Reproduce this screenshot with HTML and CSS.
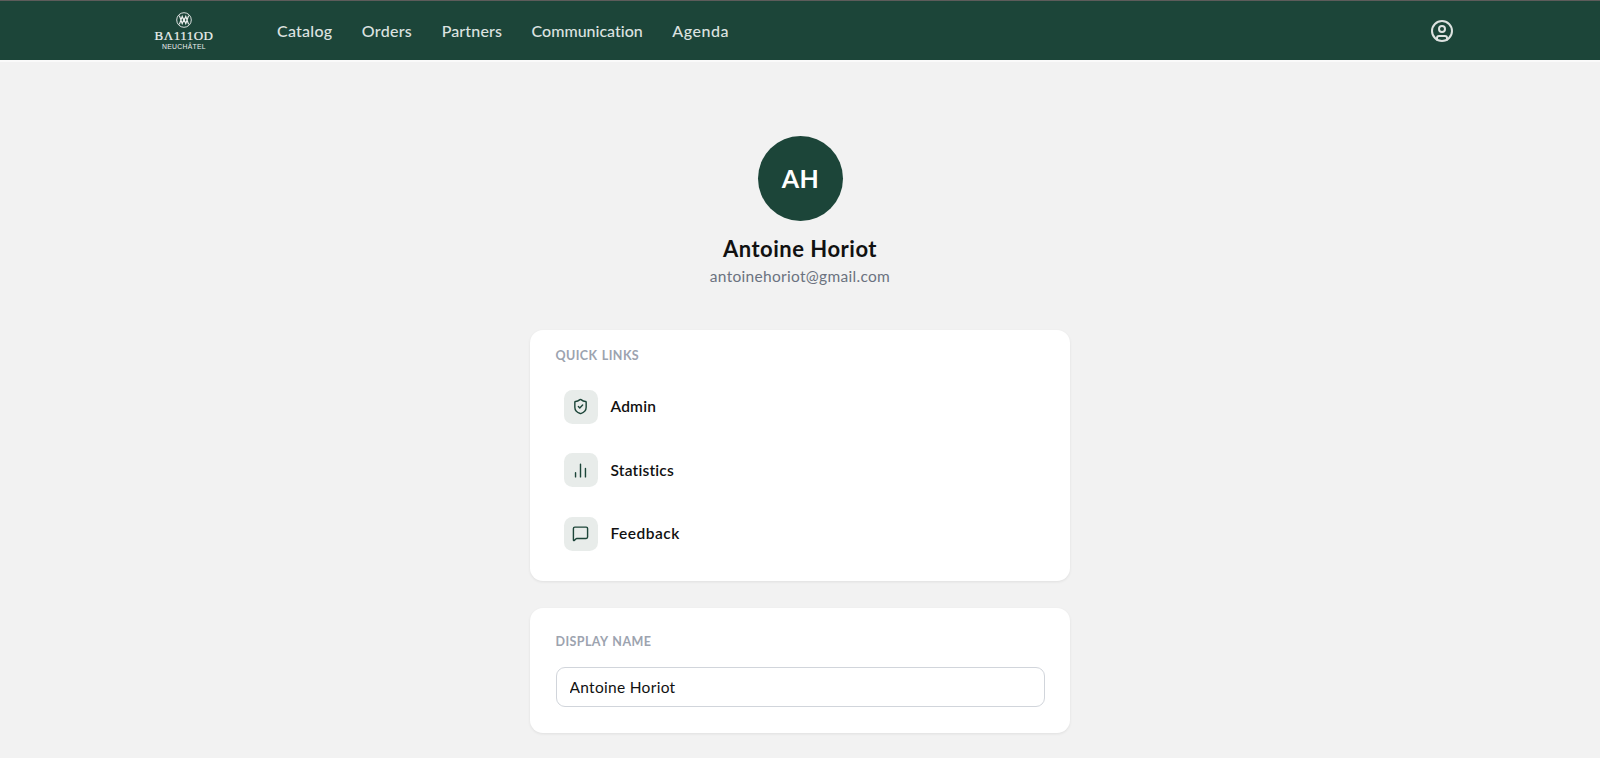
FILE: index.html
```html
<!DOCTYPE html>
<html lang="en">
<head>
  <meta charset="UTF-8">
  <meta name="viewport" content="width=device-width, initial-scale=1.0">
  <title>Profile</title>
  <link rel="stylesheet" href="styles.css">
</head>
<body>
  <header class="navbar">
    <a class="logo" href="#">
      <svg class="logo-mark" viewBox="0 0 16 16" fill="none" stroke="currentColor">
        <circle cx="8" cy="8" r="7.3" stroke-width="0.9"/>
        <path d="M3.4 3.6 6.2 11.6 8 7.4 9.8 11.6 12.6 3.6M3.4 12.4 6.2 4.4 8 8.6 9.8 4.4 12.6 12.4" stroke-width="1.2"/>
      </svg>
      <span class="logo-name">BΛ111OD</span>
      <span class="logo-city">NEUCHÂTEL</span>
    </a>
    <nav class="nav-links">
      <a class="nav-catalog" href="#">Catalog</a>
      <a class="nav-orders" href="#">Orders</a>
      <a class="nav-partners" href="#">Partners</a>
      <a class="nav-communication" href="#">Communication</a>
      <a class="nav-agenda" href="#">Agenda</a>
    </nav>
    <a class="account" href="#" aria-label="Account">
      <svg viewBox="0 0 24 24" fill="none" stroke="currentColor" stroke-width="2" stroke-linecap="round" stroke-linejoin="round">
        <circle cx="12" cy="12" r="10"/>
        <circle cx="12" cy="10" r="3"/>
        <path d="M7 20.7V19a2 2 0 0 1 2-2h6a2 2 0 0 1 2 2v1.7"/>
      </svg>
    </a>
  </header>

  <main class="profile">
    <div class="avatar">AH</div>
    <h1>Antoine Horiot</h1>
    <p class="email">antoinehoriot@gmail.com</p>

    <section class="card quick-links">
      <h2>QUICK LINKS</h2>
      <a class="quick-link" href="#">
        <span class="link-icon">
          <svg viewBox="0 0 24 24">
            <path d="M20 13c0 5-3.5 7.5-7.66 8.95a1 1 0 0 1-.67-.01C7.5 20.5 4 18 4 13V6a1 1 0 0 1 1-1c2 0 4.5-1.2 6.24-2.72a1.17 1.17 0 0 1 1.52 0C14.51 3.81 17 5 19 5a1 1 0 0 1 1 1z"/>
            <path d="m9 12 2 2 4-4"/>
          </svg>
        </span>
        <span class="link-text">Admin</span>
      </a>
      <a class="quick-link" href="#">
        <span class="link-icon">
          <svg viewBox="0 0 24 24">
            <path d="M5 21v-6M12 21V3M19 21V9"/>
          </svg>
        </span>
        <span class="link-text">Statistics</span>
      </a>
      <a class="quick-link" href="#">
        <span class="link-icon">
          <svg viewBox="0 0 24 24">
            <path d="M22 17a2 2 0 0 1-2 2H6.8a2 2 0 0 0-1.4.6l-2.2 2.2A.7.7 0 0 1 2 21.3V5a2 2 0 0 1 2-2h16a2 2 0 0 1 2 2z"/>
          </svg>
        </span>
        <span class="link-text link-feedback">Feedback</span>
      </a>
    </section>

    <section class="card display-name">
      <label for="display_name">DISPLAY NAME</label>
      <input type="text" id="display_name" name="display_name" value="Antoine Horiot">
    </section>
  </main>
</body>
</html>
```
FILE: styles.css
```css
* {
  box-sizing: border-box;
}
body {
  margin: 0;
  height: 758px;
  overflow: hidden;
  background-color: #f2f2f2;
  color: #111;
  font-family: Lato, "Liberation Sans", sans-serif;
  font-variant-ligatures: none;
}
a {
  color: inherit;
  text-decoration: none;
}
.navbar {
  display: flex;
  align-items: center;
  height: 62px;
  padding: 0 146px 0 154px;
  background-color: #1c4539;
  border-top: 1px solid #5d5c5b;
  border-bottom: 2px solid #fafafa;
  color: #dde2e0;
}
.logo {
  display: flex;
  flex-direction: column;
  align-items: center;
  width: 60px;
  padding-top: 1px;
  color: #eef1f0;
}
.logo-mark {
  width: 16px;
  height: 16px;
}
.logo-name {
  font-family: "Liberation Serif", serif;
  font-size: 13px;
  line-height: 13px;
  letter-spacing: 0.5px;
  margin-top: 1px;
  -webkit-text-stroke: 0.2px currentColor;
}
.logo-city {
  margin-top: 1px;
  font-family: "Liberation Sans", sans-serif;
  font-size: 6.8px;
  line-height: 8px;
  letter-spacing: 0.3px;
}
.nav-links {
  display: flex;
  gap: 29.5px;
  margin-left: 63px;
  padding-top: 1px;
  font-size: 16px;
  font-weight: 500;
  line-height: 20px;
}
.nav-catalog {
  letter-spacing: 0.25px;
}
.nav-orders {
  letter-spacing: 0.3px;
}
.nav-partners {
  letter-spacing: 0.15px;
}
.nav-agenda {
  letter-spacing: 0.55px;
}
.account {
  display: flex;
  margin-left: auto;
}
.account svg {
  width: 24px;
  height: 24px;
}
.profile {
  display: flex;
  flex-direction: column;
  align-items: center;
  width: 540px;
  margin: 0 auto;
  padding-top: 74px;
}
.avatar {
  display: flex;
  align-items: center;
  justify-content: center;
  width: 85px;
  height: 85px;
  padding: 0 0 1px 1px;
  border-radius: 50%;
  background-color: #1c4539;
  color: white;
  font-size: 25px;
  font-weight: 700;
  letter-spacing: 0.5px;
}
h1 {
  margin: 13.5px 0 0;
  font-size: 22px;
  line-height: 28px;
  font-weight: 700;
  letter-spacing: 0.5px;
}
.email {
  margin: 3px 0 0;
  font-size: 15.5px;
  line-height: 20px;
  letter-spacing: 0.3px;
  color: #6b7280;
}
.card {
  width: 100%;
  background-color: white;
  border-radius: 13px;
  box-shadow: 0 1px 3px rgba(0, 0, 0, 0.08);
}
.quick-links {
  height: 251px;
  margin-top: 44.5px;
  padding: 17px 25.5px;
}
h2,
label {
  display: block;
  margin: 0;
  font-size: 12.5px;
  line-height: 18px;
  font-weight: 700;
  letter-spacing: 0.4px;
  word-spacing: 1px;
  color: #9ca3af;
}
.quick-link {
  display: flex;
  align-items: center;
  gap: 13px;
  height: 63.5px;
  padding: 0 8px;
  font-size: 15.5px;
  font-weight: 600;
}
h2 + .quick-link {
  margin-top: 10px;
}
.link-icon {
  display: flex;
  align-items: center;
  justify-content: center;
  width: 34px;
  height: 34px;
  border-radius: 8.5px;
  background-color: #e8ecea;
}
.link-icon svg {
  width: 17px;
  height: 17px;
  fill: none;
  stroke: #1c4539;
  stroke-width: 2;
  stroke-linecap: round;
  stroke-linejoin: round;
}
.link-text {
  padding-bottom: 1px;
  letter-spacing: 0.2px;
}
.link-feedback {
  letter-spacing: 0.5px;
}
.display-name {
  height: 125px;
  margin-top: 27px;
  padding: 25px 25.5px;
}
input {
  display: block;
  width: 489px;
  height: 40px;
  margin-top: 16px;
  padding: 0 13px 1px;
  border: 1px solid #d1d5db;
  border-radius: 9px;
  background-color: white;
  color: #111;
  font-family: inherit;
  font-size: 15.5px;
  letter-spacing: 0.3px;
}
```
